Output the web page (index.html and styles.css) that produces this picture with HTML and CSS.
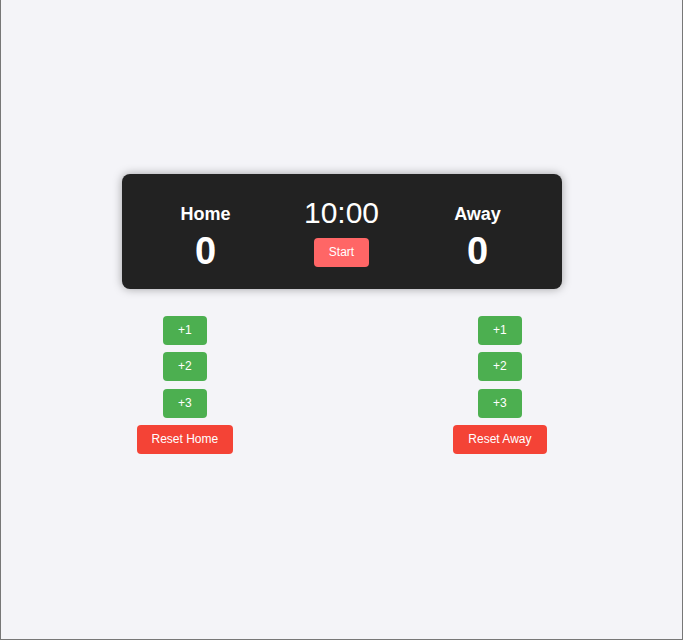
FILE: index.html
```html
<!DOCTYPE html>
<html lang="en">
<head>
<meta charset="utf-8">
<title>Scoreboard</title>
<link rel="stylesheet" href="styles.css">
</head>
<body>
<div class="page">
  <div class="scoreboard">
    <div class="team">
      <h2 class="team-name">Home</h2>
      <div class="score">0</div>
    </div>
    <div class="timer">
      <div class="time">10:00</div>
      <button class="btn btn-start">Start</button>
    </div>
    <div class="team">
      <h2 class="team-name">Away</h2>
      <div class="score">0</div>
    </div>
  </div>
  <div class="controls">
    <div class="control-col">
      <button class="btn btn-add">+1</button>
      <button class="btn btn-add">+2</button>
      <button class="btn btn-add">+3</button>
      <button class="btn btn-reset">Reset Home</button>
    </div>
    <div class="control-col">
      <button class="btn btn-add">+1</button>
      <button class="btn btn-add">+2</button>
      <button class="btn btn-add">+3</button>
      <button class="btn btn-reset">Reset Away</button>
    </div>
  </div>
</div>
</body>
</html>
```
FILE: styles.css
```css
html, body {
  margin: 0;
  padding: 0;
}
body {
  font-family: "Liberation Sans", Arial, sans-serif;
  background: #f4f4f8;
}
.page {
  box-sizing: border-box;
  height: 640px;
  border: 1px solid #777;
  border-top: none;
  padding-top: 174px;
}
.scoreboard {
  width: 400px;
  margin: 0 auto;
  padding: 20px;
  background: #222;
  color: #fff;
  border-radius: 8px;
  box-shadow: 0 0 10px rgba(0, 0, 0, 0.35);
  display: flex;
  justify-content: space-around;
  align-items: flex-start;
}
.team {
  min-width: 64px;
  display: flex;
  flex-direction: column;
  align-items: center;
}
.team-name {
  margin: 10px 0 9px;
  font-size: 18px;
  line-height: 21px;
  font-weight: bold;
}
.score {
  font-size: 38px;
  line-height: 35px;
  font-weight: bold;
}
.timer {
  min-width: 80px;
  display: flex;
  flex-direction: column;
  align-items: center;
}
.time {
  font-size: 30px;
  line-height: 37px;
  margin-bottom: 7px;
}
.btn {
  font-family: "Liberation Sans", Arial, sans-serif;
  font-size: 12px;
  line-height: 15px;
  padding: 7px 15px;
  border: none;
  border-radius: 4px;
  color: #fff;
  cursor: pointer;
}
.btn-start {
  background: #ff6666;
}
.btn-add {
  background: #4caf50;
}
.btn-reset {
  background: #f44336;
}
.controls {
  box-sizing: border-box;
  width: 440px;
  margin: 27px auto 0;
  padding: 0 15px;
  display: flex;
  justify-content: space-between;
}
.control-col {
  display: flex;
  flex-direction: column;
  align-items: center;
  gap: 7.4px;
}
```
